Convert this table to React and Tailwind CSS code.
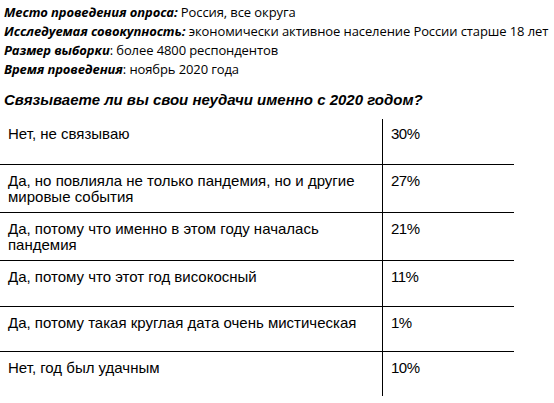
import React from 'react';

const meta = [
  { label: 'Место проведения опроса:', value: ' Россия, все округа', cls: 'h-[22px] pt-[3px]' },
  { label: 'Исследуемая совокупность:', value: ' экономически активное население России старше 18 лет', cls: 'h-[19px]' },
  { label: 'Размер выборки', value: ': более 4800  респондентов', cls: 'h-[19px]' },
  { label: 'Время проведения', value: ': ноябрь 2020  года', cls: 'h-[19px]' },
];

// row heights measured from the grid lines
const rows = [
  { lines: ['Нет, не связываю'], pct: '30%', h: 'h-[45px] pt-[7px]' },
  { lines: ['Да, но повлияла не только пандемия, но и другие', 'мировые события'], pct: '27%', h: 'h-[47px] pt-[8px]' },
  { lines: ['Да, потому что именно в этом году началась', 'пандемия'], pct: '21%', h: 'h-[47px] pt-[8px]' },
  { lines: ['Да, потому что этот год високосный'], pct: '11%', h: 'h-[45px] pt-[8px]' },
  { lines: ['Да, потому такая круглая дата очень мистическая'], pct: '1%', h: 'h-[44px] pt-[8px]' },
  { lines: ['Нет, год был удачным'], pct: '10%', h: 'h-[44px] pt-[8px]' },
];

const App = () => {
  return (
    <div className="w-[554px] h-[403px] bg-white overflow-hidden text-black">
      <div className="pl-[4px] font-['Open_Sans',sans-serif] text-[13px] leading-[19px] tracking-[-0.1px]">
        {meta.map((m) => (
          <div key={m.label} className={m.cls}>
            <span className="font-bold italic">{m.label}</span>
            {m.value}
          </div>
        ))}
      </div>
      <div className="pl-[4px] pt-[11px] h-[40px] font-['Liberation_Sans',Arial,sans-serif] text-[15px] font-bold italic leading-[20px]">
        Связываете ли вы свои неудачи именно с 2020 годом?
      </div>
      <div className="w-[514px] font-['Liberation_Sans',Arial,sans-serif] text-[15px] leading-[16px]">
        {rows.map((r, i) => (
          <div key={r.pct} className={`flex ${i > 0 ? 'border-t border-black' : ''}`}>
            <div className={`w-[383px] pl-[8px] border-r border-black whitespace-nowrap ${r.h}`}>
              {r.lines.map((l) => (
                <div key={l}>{l}</div>
              ))}
            </div>
            <div className={`flex-1 pl-[8px] tracking-[-0.5px] ${r.h}`}>{r.pct}</div>
          </div>
        ))}
      </div>
    </div>
  );
};

export default App;
